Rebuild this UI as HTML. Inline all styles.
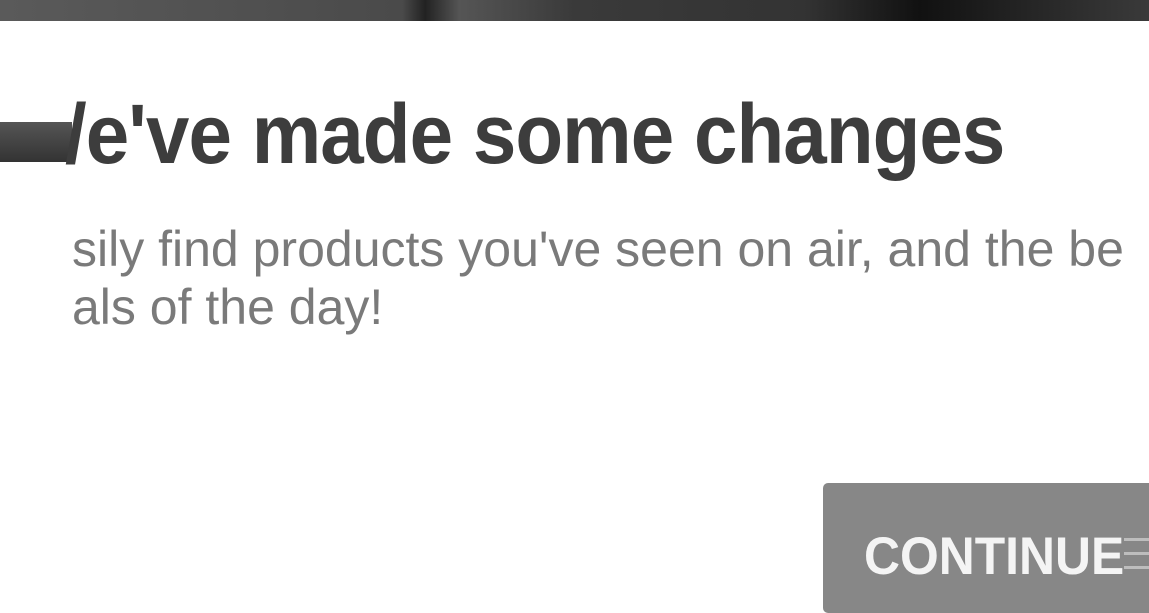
<!DOCTYPE html>
<html><head><meta charset="utf-8"><style>
html,body{margin:0;padding:0;width:1149px;height:599px;overflow:hidden;background:#fff;font-family:"Liberation Sans",sans-serif}
.top{position:absolute;left:0;top:0;width:1149px;height:21px;background:linear-gradient(90deg,#5a5a5a 0%,#4a4a4a 35%,#222 37%,#555 40%,#3a3a3a 50%,#333 70%,#111 80%,#2a2a2a 92%,#3a3a3a 100%)}
.bar{position:absolute;left:0;top:122px;width:72px;height:40px;background:linear-gradient(180deg,#555,#333)}
.h{position:absolute;left:65px;top:86px;font-size:84px;font-weight:bold;color:#3d3d3d;white-space:nowrap;transform-origin:0 0;transform:scaleX(0.93);letter-spacing:-1px}
.p{position:absolute;left:72px;top:220px;font-size:50px;line-height:58px;color:#7a7a7a;white-space:nowrap;transform-origin:0 0;transform:scaleX(1.0)}
.btn{position:absolute;left:823px;top:483px;width:340px;height:130px;background:#878787;border-radius:5px}
.bt{position:absolute;left:864px;top:526px;font-size:53px;font-weight:bold;color:#f4f4f4;white-space:nowrap;transform-origin:0 0;transform:scaleX(0.94)}
.ln{position:absolute;left:1124px;width:25px;height:3px;background:#bdbdbd}
</style></head><body>
<div class="top"></div>
<div class="bar"></div>
<div class="h">/e've made some changes</div>
<div class="p">sily find products you've seen on air, and the be<br>als of the day!</div>
<div class="btn"></div>
<div class="bt">CONTINUE</div>
<div class="ln" style="top:538px"></div>
<div class="ln" style="top:552px"></div>
<div class="ln" style="top:566px"></div>
</body></html>
